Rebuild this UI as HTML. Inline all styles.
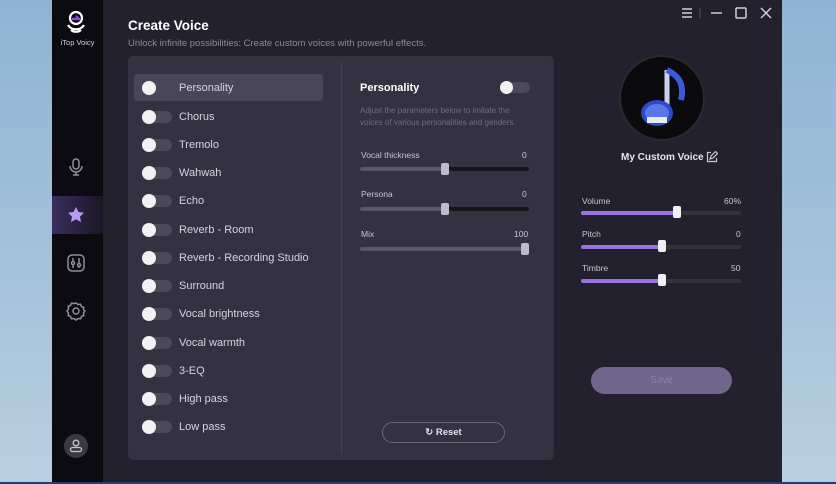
<!DOCTYPE html><html><head><style>
*{margin:0;padding:0;box-sizing:border-box}
body{width:836px;height:484px;overflow:hidden;background:linear-gradient(180deg,#8fb4d3,#a7c3da 60%,#b9cfe0);font-family:"Liberation Sans",sans-serif;position:relative}
.abs{position:absolute}
#side{left:52px;top:0;width:51px;height:484px;background:#0c0b11}
#main{left:103px;top:0;width:679px;height:482px;background:#22212d}
#panel{left:128px;top:56px;width:426px;height:404px;background:#343241;border-radius:5px}
.row{position:absolute;left:134px;width:189px;height:27px;color:#d6d4dc;font-size:11px}
.row .tg{position:absolute;left:8px;top:8px;width:30px;height:12px;border-radius:6px;background:#4c4a58}
.row .tg:before{content:"";position:absolute;left:0;top:-1px;width:14px;height:14px;border-radius:50%;background:#f2f2f5}
.row span{position:absolute;left:45px;top:8px;line-height:13px}
.lbl{font-size:8.5px;color:#c7c5cf}
.trk{position:absolute;height:4px;border-radius:2px;background:#16151c}
.thumb{position:absolute;width:8px;height:12px;background:#bdbbc6;border-radius:2px}
</style></head><body>
<div id="side" class="abs"></div>
<div class="abs" style="left:52px;top:196px;width:51px;height:38px;background:linear-gradient(90deg,#3a2d5c,#1a1626)"></div>
<svg class="abs" style="left:64px;top:9px" width="24" height="28" viewBox="0 0 24 28"><circle cx="12" cy="9" r="6" fill="none" stroke="#fff" stroke-width="2.2"/><path d="M4 16a9 8 0 0 0 16 0M7 21a6 4 0 0 0 10 0" fill="none" stroke="#fff" stroke-width="2.2"/><path d="M8 10h7l-3-3" stroke="#8a4cf0" stroke-width="2.2" fill="none"/></svg>
<div class="abs" style="left:56px;top:38px;width:43px;text-align:center;color:#cfcfd6;font-size:7.5px">iTop Voicy</div>
<svg class="abs" style="left:66px;top:157px" width="20" height="20" viewBox="0 0 20 20" fill="none" stroke="#8f8d99" stroke-width="1.5"><rect x="7" y="2" width="6" height="10" rx="3"/><path d="M4 9a6 6 0 0 0 12 0M10 15v3M7 18h6"/></svg>
<svg class="abs" style="left:66px;top:206px" width="20" height="18" viewBox="0 0 20 18"><path d="M10 1l2.5 5 5.5.8-4 3.8 1 5.4-5-2.6-5 2.6 1-5.4-4-3.8 5.5-.8z" fill="#b89af7"/></svg>
<svg class="abs" style="left:66px;top:253px" width="20" height="20" viewBox="0 0 20 20" fill="none" stroke="#8f8d99" stroke-width="1.5"><rect x="2" y="2" width="16" height="16" rx="4"/><path d="M7 5v3M7 12v3M13 5v5M13 14v1"/><circle cx="7" cy="10" r="1.5"/><circle cx="13" cy="12" r="1.5"/></svg>
<svg class="abs" style="left:66px;top:301px" width="20" height="20" viewBox="0 0 20 20" fill="none" stroke="#8f8d99" stroke-width="1.5"><path d="M10 2l2 1.5 2.5-.3 1 2.3 2.3 1-.3 2.5L19 10l-1.5 2 .3 2.5-2.3 1-1 2.3-2.5-.3L10 19l-2-1.5-2.5.3-1-2.3-2.3-1 .3-2.5L1 10l1.5-2-.3-2.5 2.3-1 1-2.3 2.5.3z"/><circle cx="10" cy="10" r="3"/></svg>
<div class="abs" style="left:64px;top:434px;width:24px;height:24px;border-radius:50%;background:#3b3a44"></div>
<svg class="abs" style="left:68px;top:438px" width="16" height="16" viewBox="0 0 16 16" fill="none" stroke="#c6c4cd" stroke-width="1.3"><circle cx="8" cy="5" r="2.8"/><rect x="2.5" y="9.5" width="11" height="4" rx="2"/></svg>
<div id="main" class="abs"></div>
<div class="abs" style="left:0;top:482px;width:836px;height:2px;background:#1d3f7a"></div>
<div class="abs" style="left:128px;top:18px;color:#fff;font-size:13.5px;font-weight:bold">Create Voice</div>
<div class="abs" style="left:128px;top:38px;color:#8d8b98;font-size:9.5px">Unlock infinite possibilities: Create custom voices with powerful effects.</div>
<svg class="abs" style="left:678px;top:6px" width="100" height="14" viewBox="0 0 100 14" fill="none" stroke="#d0cfd6" stroke-width="1.5"><path d="M4 3h10M4 7h10M4 11h10"/><path d="M22 2v10" stroke="#444"/><path d="M33 7h11"/><rect x="58" y="2" width="10" height="10" rx="1"/><path d="M83 2l10 10M93 2L83 12"/></svg>
<div id="panel" class="abs"></div>
<div class="abs" style="left:341px;top:62px;width:1px;height:392px;background:#45434f"></div>
<div class="row" style="top:74px;background:#4a4659;border-radius:3px"><div class="tg" style="background:#4a4659"></div><span>Personality</span></div>
<div class="row" style="top:103px"><div class="tg"></div><span>Chorus</span></div>
<div class="row" style="top:131px"><div class="tg"></div><span>Tremolo</span></div>
<div class="row" style="top:159px"><div class="tg"></div><span>Wahwah</span></div>
<div class="row" style="top:187px"><div class="tg"></div><span>Echo</span></div>
<div class="row" style="top:216px"><div class="tg"></div><span>Reverb - Room</span></div>
<div class="row" style="top:244px"><div class="tg"></div><span>Reverb - Recording Studio</span></div>
<div class="row" style="top:272px"><div class="tg"></div><span>Surround</span></div>
<div class="row" style="top:300px"><div class="tg"></div><span>Vocal brightness</span></div>
<div class="row" style="top:329px"><div class="tg"></div><span>Vocal warmth</span></div>
<div class="row" style="top:357px"><div class="tg"></div><span>3-EQ</span></div>
<div class="row" style="top:385px"><div class="tg"></div><span>High pass</span></div>
<div class="row" style="top:413px"><div class="tg"></div><span>Low pass</span></div>
<div class="abs" style="left:360px;top:82px;color:#fff;font-size:11px;font-weight:bold">Personality</div>
<div class="abs" style="left:500px;top:82px;width:30px;height:11px;border-radius:6px;background:#4c4a58"></div>
<div class="abs" style="left:500px;top:81px;width:13px;height:13px;border-radius:50%;background:#f2f2f5"></div>
<div class="abs" style="left:360px;top:105px;width:170px;color:#6f6d7a;font-size:8px;line-height:12px">Adjust the parameters below to imitate the voices of various personalities and genders.</div>
<div class="abs lbl" style="left:361px;top:150px">Vocal thickness</div><div class="abs lbl" style="left:522px;top:150px">0</div>
<div class="trk" style="left:360px;top:167px;width:169px"></div><div class="trk" style="left:360px;top:167px;width:85px;background:#5a5868"></div><div class="thumb" style="left:441px;top:163px"></div>
<div class="abs lbl" style="left:361px;top:189px">Persona</div><div class="abs lbl" style="left:522px;top:189px">0</div>
<div class="trk" style="left:360px;top:207px;width:169px"></div><div class="trk" style="left:360px;top:207px;width:85px;background:#5a5868"></div><div class="thumb" style="left:441px;top:203px"></div>
<div class="abs lbl" style="left:361px;top:229px">Mix</div><div class="abs lbl" style="left:514px;top:229px">100</div>
<div class="trk" style="left:360px;top:247px;width:169px;background:#5a5868"></div><div class="thumb" style="left:521px;top:243px"></div>
<div class="abs" style="left:382px;top:422px;width:123px;height:21px;border:1px solid #6b6977;border-radius:11px;color:#e3e2e8;font-size:9.5px;font-weight:bold;text-align:center;line-height:19px">↻ Reset</div>
<div class="abs" style="left:619px;top:55px;width:86px;height:86px;border-radius:50%;background:#0b0b0e;border:2px solid #2a2932"></div>
<svg class="abs" style="left:637px;top:65px" width="50" height="66" viewBox="0 0 50 66"><path d="M30 5v42" stroke="#c8d4ee" stroke-width="5"/><path d="M30 5c10 5 18 12 14 30" stroke="#3a5ad8" stroke-width="6" fill="none"/><ellipse cx="20" cy="48" rx="16" ry="13" fill="#2f49c8"/><ellipse cx="20" cy="48" rx="12" ry="9" fill="#5877e8"/><path d="M10 52h20v6H10z" fill="#e8ecf5"/></svg>
<div class="abs" style="left:621px;top:152px;color:#e6e5ea;font-size:10px;font-weight:bold">My Custom Voice</div>
<svg class="abs" style="left:706px;top:151px" width="12" height="12" viewBox="0 0 12 12" fill="none" stroke="#c9c8cf" stroke-width="1.2"><path d="M5 1.5H1.5v9h9V7M4 8l1-3 4.5-4.5 2 2L7 7z"/></svg>
<div class="abs lbl" style="left:582px;top:196px">Volume</div><div class="abs lbl" style="left:724px;top:196px">60%</div>
<div class="trk" style="left:581px;top:211px;width:160px;background:#34323f"></div><div class="trk" style="left:581px;top:211px;width:96px;background:#9a72e8"></div><div class="thumb" style="left:673px;top:206px;background:#f0f0f3"></div>
<div class="abs lbl" style="left:582px;top:229px">Pitch</div><div class="abs lbl" style="left:736px;top:229px">0</div>
<div class="trk" style="left:581px;top:245px;width:160px;background:#34323f"></div><div class="trk" style="left:581px;top:245px;width:81px;background:#9a72e8"></div><div class="thumb" style="left:658px;top:240px;background:#f0f0f3"></div>
<div class="abs lbl" style="left:582px;top:263px">Timbre</div><div class="abs lbl" style="left:731px;top:263px">50</div>
<div class="trk" style="left:581px;top:279px;width:160px;background:#34323f"></div><div class="trk" style="left:581px;top:279px;width:81px;background:#9a72e8"></div><div class="thumb" style="left:658px;top:274px;background:#f0f0f3"></div>
<div class="abs" style="left:591px;top:367px;width:141px;height:27px;border-radius:14px;background:#6f6689;color:#8c84a6;font-size:10px;text-align:center;line-height:27px">Save</div>
</body></html>
